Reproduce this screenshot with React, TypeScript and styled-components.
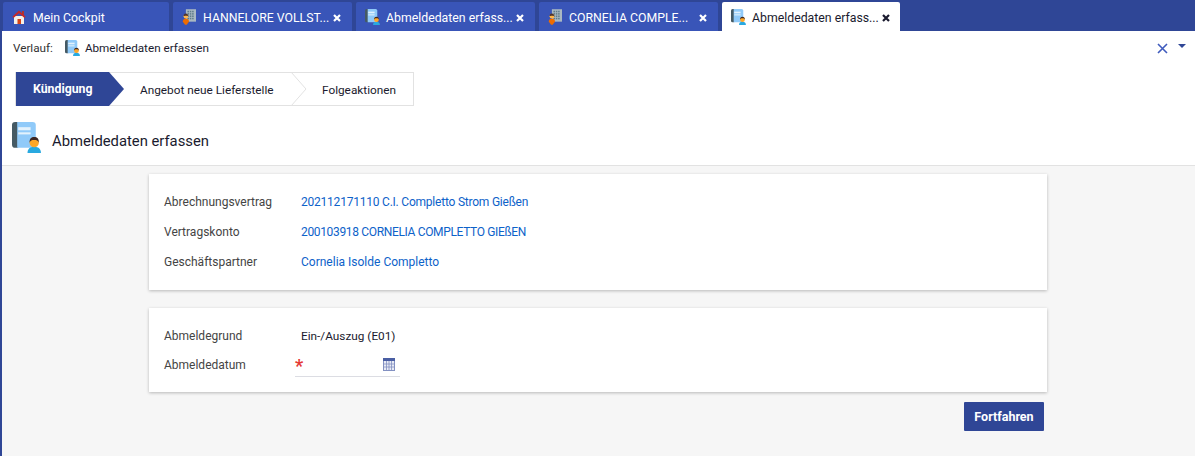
import styled, { createGlobalStyle } from "styled-components";

const BLUE = "#2f4696";
const TAB = "#3955b8";

const GlobalStyle = createGlobalStyle`
  html, body {
    margin: 0;
    height: 100%;
    background: #f6f6f6;
    font-family: Roboto, "Liberation Sans", sans-serif;
  }
`;

const BookIcon = ({ size }: { size: number }) => (
  <svg width={size} height={size} viewBox="0 0 30 30">
    <path d="M3 0h3v25H3a3 3 0 0 1-3-3V3a3 3 0 0 1 3-3z" fill="#455a64" />
    <path d="M5 0h15a3 3 0 0 1 3 3v19a3 3 0 0 1-3 3H5z" fill="#90caf9" />
    <rect x="6" y="5" width="12" height="3" fill="#e3f2fd" />
    <rect x="6" y="10" width="12" height="2" fill="#e3f2fd" />
    <path d="M15 30c0-4 2.500-6 6.500-6s6.500 2 6.500 6z" fill="#29a9e0" />
    <circle cx="21.500" cy="20" r="4.500" fill="#ffa726" />
    <path d="M17 20c0-4 1.500-5.500 4.500-5.500S26 16 26 20c-1-2-2-2.500-4.500-2.500S18 18 17 20z" fill="#3e2723" />
  </svg>
);

const BuildingIcon = () => (
  <svg width="14" height="16" viewBox="0 0 18 20">
    <rect x="5" y="0" width="13" height="16" fill="#a9b8c2" />
    {[2, 5, 8, 11].map((y) =>
      [7, 10, 13].map((x) => <rect key={`${x}-${y}`} x={x} y={y} width="2" height="2" fill="#607d8b" />)
    )}
    <path d="M1 16c0-3 2-4 4-4s4 1 4 4l-3 4H4z" fill="#ef6c00" />
    <circle cx="5" cy="9" r="3" fill="#ffb74d" />
    <path d="M2 9c0-2 1-3.500 3-3.500S8 7 8 9c-1-1-5-1-6 0z" fill="#4e342e" />
  </svg>
);

const HomeIcon = () => (
  <svg width="14" height="14" viewBox="0 0 14 14">
    <path d="M2 6h10v8H2z" fill="#f5f0e8" />
    <rect x="5.500" y="9" width="3.500" height="5" fill="#d84315" />
    <rect x="10" y="1" width="2" height="4" fill="#a33" />
    <path d="M7 0.500L0.500 6.500l1 1.500L7 3.200 12.500 8l1-1.500z" fill="#c62828" />
  </svg>
);

const CloseGlyph = ({ $active }: { $active?: boolean }) => (
  <svg width="8" height="8" viewBox="0 0 8 8">
    <path d="M1 1l6 6M7 1L1 7" stroke={$active ? "#1a1a2e" : "#ffffff"} strokeWidth="2.200" />
  </svg>
);

const tabs = [
  { label: "Mein Cockpit", icon: <HomeIcon />, width: 166, closable: false },
  { label: "HANNELORE VOLLST...", icon: <BuildingIcon />, width: 179, closable: true },
  { label: "Abmeldedaten erfass...", icon: <BookIcon size={16} />, width: 179, closable: true },
  { label: "CORNELIA COMPLE...", icon: <BuildingIcon />, width: 179, closable: true },
  { label: "Abmeldedaten erfass...", icon: <BookIcon size={16} />, width: 178, closable: true, active: true },
];

const App = () => {
  return (
    <Page>
      <GlobalStyle />
      <TabBar>
        {tabs.map((tab, i) => (
          <Tab key={i} $active={tab.active} $width={tab.width}>
            <TabIcon>{tab.icon}</TabIcon>
            <TabLabel>{tab.label}</TabLabel>
            {tab.closable && <CloseGlyph $active={tab.active} />}
          </Tab>
        ))}
      </TabBar>

      <Head>
        <HistoryRow>
          <HistoryLabel>Verlauf:</HistoryLabel>
          <HistoryItem>
            <BookIcon size={16} />
            Abmeldedaten erfassen
          </HistoryItem>
          <HistoryTools>
            <svg width="11" height="11" viewBox="0 0 11 11">
              <path d="M1 1l9 9M10 1l-9 9" stroke="#3f5bbd" strokeWidth="1.600" />
            </svg>
            <Caret />
          </HistoryTools>
        </HistoryRow>

        <Stepper>
          <ActiveStep>Kündigung</ActiveStep>
          <Step>
            Angebot neue Lieferstelle
            <Chevron width="16" height="34" viewBox="0 0 16 34">
              <path d="M0 0l15 17L0 34" fill="#fff" stroke="#e2e2e2" />
            </Chevron>
          </Step>
          <LastStep>Folgeaktionen</LastStep>
        </Stepper>

        <TitleRow>
          <BookIcon size={31} />
          <Title>Abmeldedaten erfassen</Title>
        </TitleRow>
      </Head>

      <Content>
        <Card $height={116}>
          <Row>
            <Label>Abrechnungsvertrag</Label>
            <Link $tracking={-0.22}>202112171110 C.I. Completto Strom Gießen</Link>
          </Row>
          <Row>
            <Label>Vertragskonto</Label>
            <Link $tracking={-0.34}>200103918 CORNELIA COMPLETTO GIEßEN</Link>
          </Row>
          <Row>
            <Label>Geschäftspartner</Label>
            <Link $tracking={0}>Cornelia Isolde Completto</Link>
          </Row>
        </Card>

        <Card $height={84}>
          <Row>
            <Label>Abmeldegrund</Label>
            <Value>Ein-/Auszug (E01)</Value>
          </Row>
          <Row>
            <Label>Abmeldedatum</Label>
            <DateField>
              <Required>*</Required>
              <svg width="12" height="14" viewBox="0 0 12 14">
                <rect x="0.500" y="1.500" width="11" height="12" fill="#e8ebf5" stroke="#8391c2" />
                <rect x="0" y="1" width="12" height="3" fill="#4a5ea3" />
                <path d="M0 7h12M0 10h12M3.500 4v10M6 4v10M8.500 4v10" stroke="#8391c2" strokeWidth="0.800" />
              </svg>
            </DateField>
          </Row>
        </Card>

        <Actions>
          <Primary>Fortfahren</Primary>
        </Actions>
      </Content>
    </Page>
  );
};

const Page = styled.div`
  height: 456px;
  border-left: 2px solid ${BLUE};
  box-sizing: border-box;
  display: flex;
  flex-direction: column;
  overflow: hidden;
  font-size: 12px;
`;

const TabBar = styled.div`
  height: 31px;
  background: ${BLUE};
  display: flex;
  align-items: flex-end;
  gap: 4px;
  padding-left: 1px;
  flex-shrink: 0;
`;

const Tab = styled.div<{ $active?: boolean; $width: number }>`
  width: ${({ $width }) => $width}px;
  height: 29px;
  box-sizing: border-box;
  padding: 2px ${({ $active }) => ($active ? 10 : 11)}px 0 9px;
  display: flex;
  align-items: center;
  border-radius: 2px 2px 0 0;
  background: ${({ $active }) => ($active ? "#fff" : TAB)};
  color: ${({ $active }) => ($active ? "#1a1a2e" : "#fff")};
  font-size: 12.3px;
`;

const TabIcon = styled.span`
  width: 21px;
  display: flex;
  align-items: center;
  flex-shrink: 0;
  margin-top: -2px;
`;

const TabLabel = styled.span`
  flex: 1;
  white-space: nowrap;
`;

const Head = styled.div`
  background: #fff;
  border-bottom: 1px solid #e2e2e2;
  flex-shrink: 0;
  height: 135px;
  box-sizing: border-box;
`;

const HistoryRow = styled.div`
  height: 34px;
  display: flex;
  align-items: center;
  padding: 0 9px 0 11px;
  font-size: 11.7px;
`;

const HistoryLabel = styled.span`
  color: #333;
  margin-right: 12px;
`;

const HistoryItem = styled.span`
  display: flex;
  align-items: center;
  gap: 4px;
  color: #1a1a2e;
`;

const HistoryTools = styled.div`
  margin-left: auto;
  display: flex;
  align-items: center;
  gap: 10px;
`;

const Caret = styled.span`
  width: 0;
  height: 0;
  border-left: 4px solid transparent;
  border-right: 4px solid transparent;
  border-top: 4px solid ${BLUE};
  margin-bottom: 4px;
`;

const Stepper = styled.div`
  margin: 7px 0 0 13px;
  width: 399px;
  height: 34px;
  box-sizing: border-box;
  border: 1px solid #e2e2e2;
  display: flex;
  align-items: center;
  color: #1a1a2e;
  font-size: 11.8px;
`;

const ActiveStep = styled.div`
  width: 108px;
  height: 34px;
  margin: -1px 0;
  box-sizing: border-box;
  padding-left: 17px;
  display: flex;
  align-items: center;
  background: ${BLUE};
  color: #fff;
  font-weight: 700;
  font-size: 12.3px;
  clip-path: polygon(0 0, 93px 0, 100% 50%, 93px 100%, 0 100%);
`;

const Step = styled.div`
  position: relative;
  width: 183px;
  height: 100%;
  display: flex;
  align-items: center;
  padding: 1px 0 0 16px;
  box-sizing: border-box;
`;

const Chevron = styled.svg`
  position: absolute;
  right: 0;
  top: -1px;
`;

const LastStep = styled.div`
  padding: 1px 0 0 15px;
`;

const TitleRow = styled.div`
  display: flex;
  align-items: center;
  margin: 16px 0 0 10px;
  gap: 9px;
`;

const Title = styled.h1`
  margin: 6px 0 0;
  font-size: 14.8px;
  font-weight: 400;
  color: #1a1a2e;
`;

const Content = styled.div`
  flex: 1;
  display: flex;
  flex-direction: column;
  padding: 8px 148px 0 147px;
  gap: 18px;
`;

const Card = styled.section<{ $height: number }>`
  height: ${({ $height }) => $height}px;
  box-sizing: border-box;
  background: #fff;
  box-shadow: 0 1px 3px rgba(0, 0, 0, 0.25);
  padding: 13px 15px;
  display: flex;
  flex-direction: column;
`;

const Row = styled.div`
  height: 30px;
  display: flex;
  align-items: center;
`;

const Label = styled.span`
  width: 131px;
  color: #444;
`;

const Link = styled.a<{ $tracking: number }>`
  margin-left: 6px;
  color: #0d62c9;
  letter-spacing: ${({ $tracking }) => $tracking}px;
`;

const Value = styled.span`
  margin-left: 6px;
  color: #1a1a2e;
  font-size: 11.8px;
`;

const DateField = styled.div`
  width: 105px;
  height: 24px;
  box-sizing: border-box;
  border-bottom: 1px solid #dcdde3;
  display: flex;
  align-items: center;
  justify-content: space-between;
  padding-right: 5px;
`;

const Required = styled.span`
  color: #e53935;
  font-size: 18px;
  font-weight: 700;
  line-height: 18px;
  margin-top: 3px;
`;

const Actions = styled.div`
  display: flex;
  justify-content: flex-end;
  margin-top: -8px;
  padding-right: 3px;
`;

const Primary = styled.button`
  width: 80px;
  height: 29px;
  border: 0;
  border-radius: 1px;
  background: ${BLUE};
  color: #fff;
  font-family: inherit;
  font-size: 12.5px;
  font-weight: 700;
`;

export default App;
